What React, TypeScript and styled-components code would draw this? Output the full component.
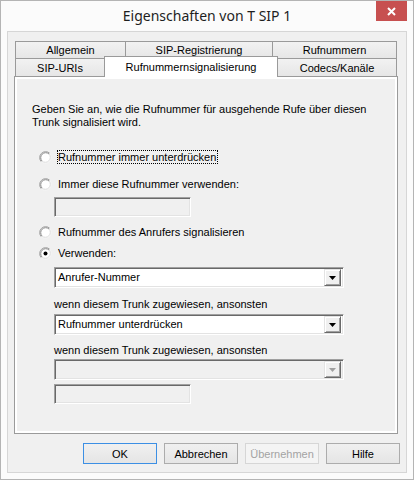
import React from "react";
import styled, { createGlobalStyle } from "styled-components";

const GlobalStyle = createGlobalStyle`
  html, body {
    margin: 0;
    padding: 0;
    background: #ffffff;
  }
  * {
    box-sizing: border-box;
  }
`;

const Window = styled.div`
  width: 414px;
  height: 480px;
  border: 1px solid #b4b4b4;
  background: #fbfbfb;
  display: flex;
  flex-direction: column;
  font-family: "Liberation Sans", Arial, sans-serif;
  font-size: 11px;
  color: #000;
`;

const TitleBar = styled.div`
  flex: none;
  height: 30px;
  padding: 0 6px;
  display: grid;
  grid-template-columns: 31px 1fr 31px;
`;

const Title = styled.div`
  grid-column: 2;
  align-self: center;
  text-align: center;
  font-family: "Noto Sans", "Open Sans", sans-serif;
  font-size: 14px;
  line-height: 20px;
  color: #1e1e1e;
`;

const CloseButton = styled.div`
  grid-column: 3;
  height: 20px;
  background: #c75050;
  display: flex;
  align-items: center;
  justify-content: center;
`;

const Client = styled.div`
  flex: 1;
  margin: 0 6px 6px;
  border: 1px solid #d6d6d6;
  background: #f0f0f0;
  padding: 9px 6px 0;
  display: flex;
  flex-direction: column;
`;

const TabStrip = styled.div`
  margin: 0 3px 0 1px;
  display: flex;
  flex-direction: column;
`;

const TabRow = styled.div<{ $h: number }>`
  height: ${(p) => p.$h}px;
  display: flex;
  align-items: flex-end;
`;

const Tab = styled.div<{ $w: number }>`
  width: ${(p) => p.$w}px;
  height: 100%;
  flex: none;
  border: 1px solid #9a9a9a;
  border-bottom: none;
  background: linear-gradient(#f2f2f2, #e6e6e6);
  display: flex;
  align-items: center;
  justify-content: center;
  white-space: nowrap;

  & + & {
    margin-left: -1px;
  }
`;

const ActiveTab = styled(Tab)`
  position: relative;
  z-index: 2;
  height: 21px;
  margin-bottom: -1px;
  background: #ffffff;
  padding-bottom: 1px;
`;

const Panel = styled.div`
  position: relative;
  z-index: 1;
  height: 358px;
  margin-right: 2px;
  border: 1px solid #9a9a9a;
  box-shadow: inset 0 0 0 2px #ffffff;
  padding: 26px 0 0 17px;
  display: flex;
  flex-direction: column;
  align-items: flex-start;
`;

const Intro = styled.p`
  margin: 0;
  line-height: 13px;
`;

const RadioRow = styled.div<{ $mt: number }>`
  margin: ${(p) => p.$mt}px 0 0 7px;
  height: 14px;
  display: flex;
  align-items: center;
  gap: 5px;
`;

const RadioLabel = styled.span<{ $focus?: boolean }>`
  border: 1px dotted ${(p) => (p.$focus ? "#000" : "transparent")};
  padding: 0 1px 0 0;
  line-height: 12px;
  white-space: nowrap;
`;

const Indented = styled.div<{ $mt: number }>`
  margin: ${(p) => p.$mt}px 0 0 22px;
`;

const Hint = styled(Indented)`
  line-height: 13px;
`;

const sunken = `
  border: 1px solid;
  border-color: #a0a0a0 #ffffff #ffffff #a0a0a0;
  box-shadow: inset 1px 1px 0 #696969, inset -1px -1px 0 #e3e3e3;
`;

const TextField = styled(Indented)`
  ${sunken}
  width: 137px;
  height: 20px;
  background: #f0f0f0;
`;

const Combo = styled(Indented)<{ $disabled?: boolean }>`
  ${sunken}
  width: 290px;
  height: 21px;
  padding: 2px;
  background: ${(p) => (p.$disabled ? "#f0f0f0" : "#ffffff")};
  display: flex;
  align-items: center;
`;

const ComboText = styled.span`
  flex: 1;
  padding-left: 1px;
  line-height: 13px;
`;

const DropButton = styled.div`
  width: 17px;
  height: 17px;
  flex: none;
  border: 1px solid;
  border-color: #e3e3e3 #696969 #696969 #e3e3e3;
  box-shadow: inset 1px 1px 0 #ffffff, inset -1px -1px 0 #a0a0a0;
  background: #f0f0f0;
  display: flex;
  align-items: center;
  justify-content: center;
`;

const ButtonRow = styled.div`
  margin-top: 9px;
  display: flex;
  justify-content: flex-end;
  gap: 7px;
`;

const Button = styled.button<{ $variant?: "default" | "disabled" }>`
  width: 74px;
  height: 21px;
  padding: 0;
  font: inherit;
  border: 1px solid
    ${(p) =>
      p.$variant === "default"
        ? "#3c8fe4"
        : p.$variant === "disabled"
        ? "#d6d6d6"
        : "#acacac"};
  background: ${(p) =>
    p.$variant === "disabled"
      ? "#f4f4f4"
      : "linear-gradient(#f0f0f0, #e5e5e5)"};
  color: ${(p) => (p.$variant === "disabled" ? "#a3a3a3" : "#000")};
`;

// classic sunken radio: dark edge top-left, light edge bottom-right
const Radio: React.FC<{ checked?: boolean }> = ({ checked }) => (
  <svg width="13" height="13" viewBox="0 0 13 13">
    <circle cx="6.5" cy="6.5" r="5.5" fill="#ffffff" />
    <path d="M2.26 10.74 A6 6 0 0 1 10.74 2.26" fill="none" stroke="#a0a0a0" />
    <path d="M10.74 2.26 A6 6 0 0 1 2.26 10.74" fill="none" stroke="#f4f4f4" />
    <path d="M2.97 10.03 A5 5 0 0 1 10.03 2.97" fill="none" stroke="#8a8a8a" />
    <path d="M10.03 2.97 A5 5 0 0 1 2.97 10.03" fill="none" stroke="#dcdcdc" />
    {checked && <circle cx="6.5" cy="6.5" r="2" fill="#000000" />}
  </svg>
);

const Arrow: React.FC<{ color: string }> = ({ color }) => (
  <svg width="7" height="4" viewBox="0 0 7 4">
    <polygon points="0,0 7,0 3.5,4" fill={color} />
  </svg>
);

export default function App() {
  return (
    <>
      <GlobalStyle />
      <Window>
        <TitleBar>
          <Title>Eigenschaften von T SIP 1</Title>
          <CloseButton>
            <svg width="9" height="9" viewBox="0 0 9 9">
              <path d="M1 1 L8 8 M8 1 L1 8" stroke="#ffffff" strokeWidth="2" />
            </svg>
          </CloseButton>
        </TitleBar>
        <Client>
          <TabStrip>
            <TabRow $h={17}>
              <Tab $w={111}>Allgemein</Tab>
              <Tab $w={148}>SIP-Registrierung</Tab>
              <Tab $w={125}>Rufnummern</Tab>
            </TabRow>
            <TabRow $h={18}>
              <Tab $w={90}>SIP-URIs</Tab>
              <ActiveTab $w={174}>Rufnummernsignalisierung</ActiveTab>
              <Tab $w={120}>Codecs/Kanäle</Tab>
            </TabRow>
          </TabStrip>
          <Panel>
            <Intro>
              Geben Sie an, wie die Rufnummer für ausgehende Rufe über diesen
              <br />
              Trunk signalisiert wird.
            </Intro>
            <RadioRow $mt={21}>
              <Radio />
              <RadioLabel $focus>Rufnummer immer unterdrücken</RadioLabel>
            </RadioRow>
            <RadioRow $mt={13}>
              <Radio />
              <RadioLabel>Immer diese Rufnummer verwenden:</RadioLabel>
            </RadioRow>
            <TextField $mt={6} />
            <RadioRow $mt={8}>
              <Radio />
              <RadioLabel>Rufnummer des Anrufers signalisieren</RadioLabel>
            </RadioRow>
            <RadioRow $mt={7}>
              <Radio checked />
              <RadioLabel>Verwenden:</RadioLabel>
            </RadioRow>
            <Combo $mt={7}>
              <ComboText>Anrufer-Nummer</ComboText>
              <DropButton>
                <Arrow color="#000000" />
              </DropButton>
            </Combo>
            <Hint $mt={10}>wenn diesem Trunk zugewiesen, ansonsten</Hint>
            <Combo $mt={3}>
              <ComboText>Rufnummer unterdrücken</ComboText>
              <DropButton>
                <Arrow color="#000000" />
              </DropButton>
            </Combo>
            <Hint $mt={9}>wenn diesem Trunk zugewiesen, ansonsten</Hint>
            <Combo $mt={2} $disabled>
              <ComboText />
              <DropButton>
                <Arrow color="#a0a0a0" />
              </DropButton>
            </Combo>
            <TextField $mt={4} />
          </Panel>
          <ButtonRow>
            <Button $variant="default">OK</Button>
            <Button>Abbrechen</Button>
            <Button $variant="disabled">Übernehmen</Button>
            <Button>Hilfe</Button>
          </ButtonRow>
        </Client>
      </Window>
    </>
  );
}
